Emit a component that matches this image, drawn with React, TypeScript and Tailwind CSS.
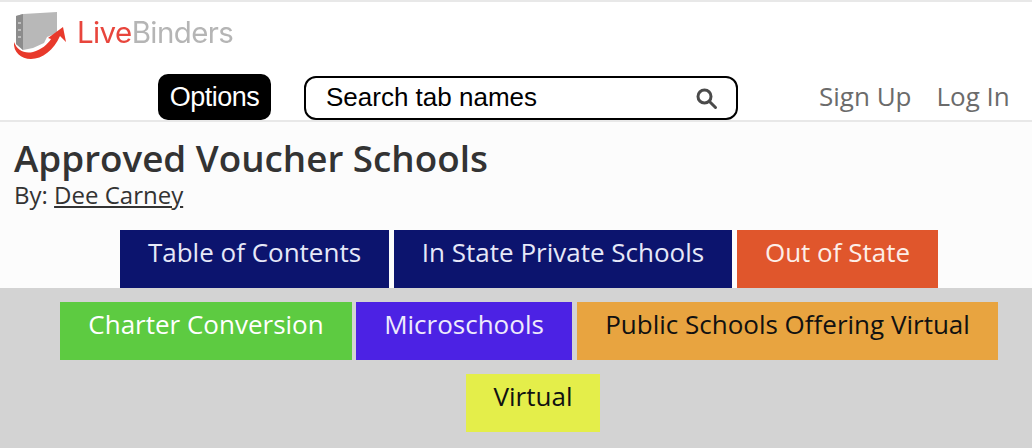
import React from 'react';

type TabData = { label: string; width: string; color: string };

const rowOne: TabData[] = [
  { label: 'Table of Contents', width: 'w-[269px]', color: 'bg-[#0c146e] text-[#e6e8f8]' },
  { label: 'In State Private Schools', width: 'w-[338px]', color: 'bg-[#0c146e] text-[#e6e8f8]' },
  { label: 'Out of State', width: 'w-[201px]', color: 'bg-[#e0562c] text-[#fdeee8]' },
];

const rowTwo: TabData[] = [
  { label: 'Charter Conversion', width: 'w-[292px]', color: 'bg-[#5dcb41] text-white' },
  { label: 'Microschools', width: 'w-[216px] mr-[1px]', color: 'bg-[#4c22e4] text-[#eeeafc]' },
  { label: 'Public Schools Offering Virtual', width: 'w-[421px]', color: 'bg-[#e8a440] text-[#111111]' },
];

const Tab: React.FC<{ tab: TabData }> = ({ tab }) => (
  <div className={`h-[58px] shrink-0 pt-[4px] text-center text-[26px] leading-[36px] ${tab.width} ${tab.color}`}>
    {tab.label}
  </div>
);

const Logo = () => (
  <div className="flex items-center">
    <svg width="70" height="62" viewBox="0 0 70 62">
      {/* spine and cover */}
      <path d="M16 13 L23 11 L57 9 L57 30 L47 34 L44 40 L33 45 L23 47 L16 41 Z" fill="#b8b8b8" />
      <path d="M16 13 L23 11 L23 47 L16 41 Z" fill="#8c8c8c" />
      <path d="M18 20 L21 20 M18 27 L21 27 M18 34 L21 34" stroke="#cfcfcf" strokeWidth="1.5" />
      {/* arrow */}
      <path d="M14 39 C17 47 24 51 33 49 C41 47 48 41 51 36 L48 35 L63 24 L66 39 L60 33 C54 47 42 56 31 56 C21 56 13 49 14 39 Z" fill="#e8392b" />
    </svg>
    <div className="ml-[7px] mt-[-2px] font-['Inter',sans-serif] text-[29.5px] leading-none tracking-[-0.6px] blur-[0.4px]">
      <span className="text-[#e8453c]">Live</span>
      <span className="text-[#b5b5b5]">Binders</span>
    </div>
  </div>
);

export default function App() {
  return (
    <div className="h-[448px] w-[1032px] overflow-hidden bg-[#d3d3d3] font-['Open_Sans',sans-serif]">
      {/* Header */}
      <header className="h-[122px] border-y-2 border-[#e8e8e8] bg-white">
        <div className="h-[60px] pt-[1px]">
          <Logo />
        </div>
        <nav className="flex items-center">
          <div className="ml-[158px] mt-[12px] flex h-[46px] w-[113px] items-center justify-center rounded-[10px] bg-black font-['Liberation_Sans',sans-serif] text-[27px] tracking-[-0.5px] text-white">
            Options
          </div>
          <div className="ml-[33px] mt-[13px] flex h-[44px] w-[434px] items-center justify-between rounded-[12px] border-2 border-black pl-[20px] pr-[18px] font-['Liberation_Sans',sans-serif] text-[26px] text-black">
            <span>Search tab names</span>
            <svg width="24" height="24" viewBox="0 0 24 24" fill="none" stroke="#4a4a4a" strokeWidth="3">
              <circle cx="10.5" cy="10.5" r="6.5" />
              <path d="M15.5 15.5 L21.5 21.5" strokeLinecap="round" />
            </svg>
          </div>
          <a className="ml-[81px] mt-[10px] text-[26px] text-[#6b6b6b]">Sign Up</a>
          <a className="ml-[25px] mt-[10px] text-[26px] text-[#6b6b6b]">Log In</a>
        </nav>
      </header>

      {/* Binder title and first row of tabs */}
      <section className="h-[166px] bg-[#fcfcfc] px-[14px] text-[#333333]">
        <h1 className="pt-[14px] text-[36.8px] font-semibold leading-[45px]">Approved Voucher Schools</h1>
        <p className="text-[24px] leading-[27px]">
          By: <a className="underline">Dee Carney</a>
        </p>
      </section>

      <div className="-mt-[58px] flex justify-center gap-[5px] pl-[26px]">
        {rowOne.map((tab) => (
          <Tab key={tab.label} tab={tab} />
        ))}
      </div>
      <div className="mt-[14px] flex justify-center gap-[4px] pl-[26px]">
        {rowTwo.map((tab) => (
          <Tab key={tab.label} tab={tab} />
        ))}
      </div>
      <div className="mt-[14px] flex justify-center pl-[34px]">
        <Tab tab={{ label: 'Virtual', width: 'w-[134px]', color: 'bg-[#e4ee4a] text-[#111111]' }} />
      </div>
    </div>
  );
}
